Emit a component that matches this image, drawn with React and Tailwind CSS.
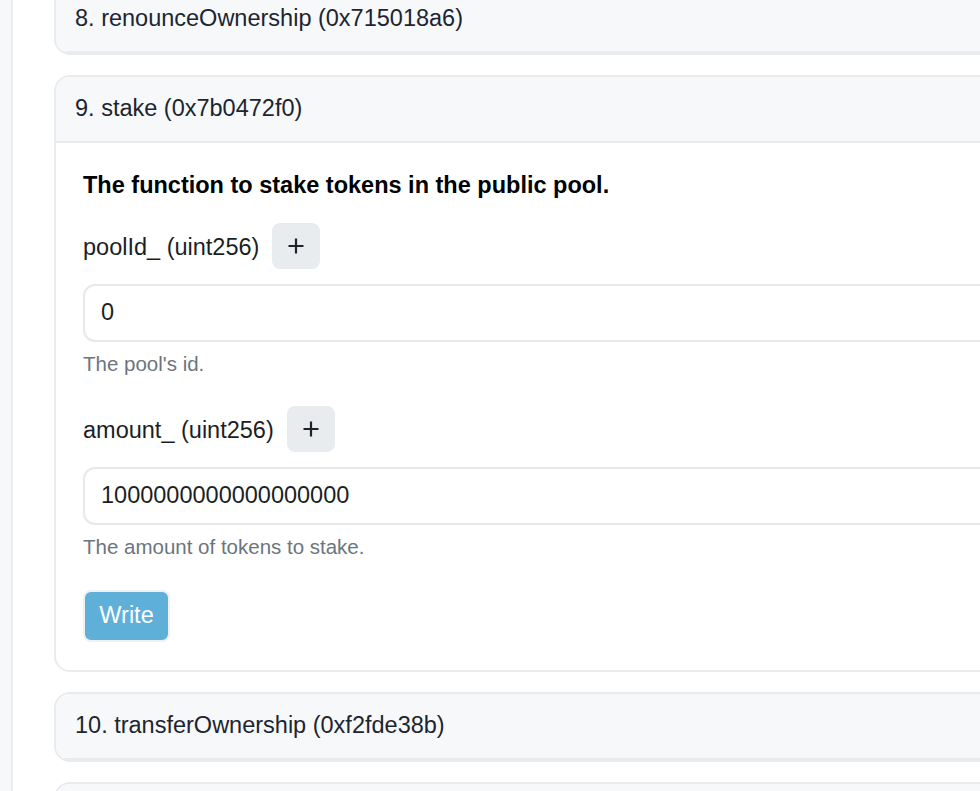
const fontStack = { fontFamily: '"Liberation Sans", Arial, sans-serif' };

function PlusIcon() {
  return (
    <svg width="16" height="16" viewBox="0 0 16 16" fill="none">
      <path d="M8 0.5v15M0.5 8h15" stroke="#1f2328" strokeWidth="2.2" />
    </svg>
  );
}

function CollapsedCard({ title, className = '' }) {
  return (
    <div className={`shrink-0 w-[1000px] rounded-2xl border-2 border-[#e9ebee] overflow-hidden ${className}`}>
      <div className="h-[66px] flex items-center pl-[19px] bg-[#f7f8fa] border-b-2 border-[#e9ebee] text-[23.5px] text-[#1c2530]">
        {title}
      </div>
    </div>
  );
}

function Field({ label, value, hint, className = '' }) {
  return (
    <div className={className}>
      <div className="flex items-center gap-[13px]">
        <span className="text-[23.5px] text-[#1b1f24] pt-[3px]">{label}</span>
        <button className="w-[48px] h-[46px] rounded-lg bg-[#e9ecef] flex items-center justify-center">
          <PlusIcon />
        </button>
      </div>
      <div className="mt-[15px] h-[58px] rounded-xl border-2 border-[#e6e8eb] bg-white flex items-center pl-4 text-[23.5px] text-[#1b1f24]">
        {value}
      </div>
      <p className="mt-[7px] text-[20.5px] leading-[30px] text-[#6c757d]">{hint}</p>
    </div>
  );
}

export default function App() {
  return (
    <div className="h-[791px] overflow-hidden bg-white flex" style={fontStack}>
      <div className="w-[13px] shrink-0 bg-[#f7f8f9] border-r-2 border-[#eceef0]" />
      <div className="pl-[41px] flex flex-col gap-5">
        <CollapsedCard title="8. renounceOwnership (0x715018a6)" className="mt-[-15px]" />

        {/* expanded: stake */}
        <div className="shrink-0 w-[1000px] rounded-2xl border-2 border-[#e9ebee] overflow-hidden">
          <div className="h-[66px] flex items-center pl-[19px] bg-[#f7f8fa] border-b-2 border-[#e9ebee] text-[23.5px] text-[#1c2530]">
            9. stake (0x7b0472f0)
          </div>
          <div className="pt-[25px] pb-[28px] pl-[27px] bg-white">
            <h3 className="text-[23.5px] leading-[35px] font-bold text-black">
              The function to stake tokens in the public pool.
            </h3>
            <Field className="mt-5" label="poolId_ (uint256)" value="0" hint="The pool's id." />
            <Field className="mt-[27px]" label="amount_ (uint256)" value="1000000000000000000" hint="The amount of tokens to stake." />
            <button className="mt-[28px] w-[87px] h-[52px] rounded-lg bg-[#5eb0d9] border-2 border-[#eef1f3] text-white text-[23.5px]">
              Write
            </button>
          </div>
        </div>

        <CollapsedCard title="10. transferOwnership (0xf2fde38b)" />
        <CollapsedCard title="" />
      </div>
    </div>
  );
}
